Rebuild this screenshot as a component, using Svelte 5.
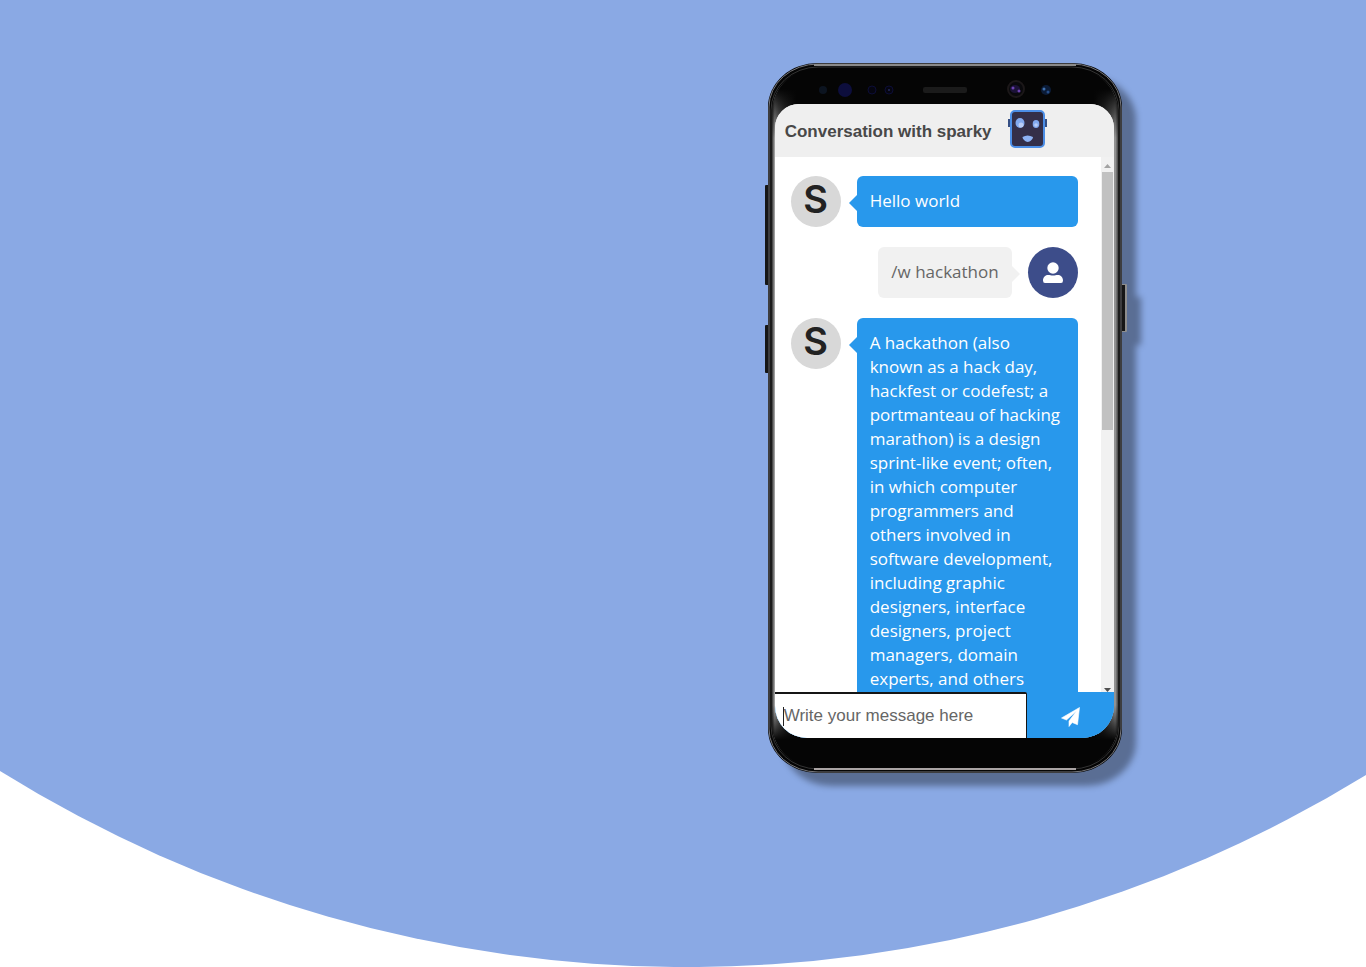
<script>
  const messages = [
    { from: 'bot', text: 'Hello world' },
    { from: 'user', text: '/w hackathon' },
    {
      from: 'bot',
      text: `A hackathon (also
known as a hack day,
hackfest or codefest; a
portmanteau of hacking
marathon) is a design
sprint-like event; often,
in which computer
programmers and
others involved in
software development,
including graphic
designers, interface
designers, project
managers, domain
experts, and others`
    }
  ];
  let draft = $state('');
</script>

<main class="hero">
  <svg class="backdrop" viewBox="0 0 1366 967" preserveAspectRatio="none" aria-hidden="true">
    <path d="M0 0H1366V775A1299 1299 0 0 1 0 771Z" fill="#8aa9e4" />
  </svg>

  <section class="phone">
    <svg class="frame" viewBox="0 0 354 710" aria-hidden="true">
      <defs>
        <linearGradient id="body" x1="0" x2="1" y1="0" y2="0">
          <stop offset="0" stop-color="#333" />
          <stop offset=".008" stop-color="#aaa" />
          <stop offset=".02" stop-color="#777" />
          <stop offset=".038" stop-color="#444" />
          <stop offset=".07" stop-color="#050505" />
          <stop offset=".93" stop-color="#050505" />
          <stop offset=".962" stop-color="#444" />
          <stop offset=".98" stop-color="#777" />
          <stop offset=".992" stop-color="#999" />
          <stop offset="1" stop-color="#444" />
        </linearGradient>
        <linearGradient id="shade" x1="0" x2="0" y1="0" y2="1">
          <stop offset="0" stop-color="#050505" />
          <stop offset=".03" stop-color="#050505" />
          <stop offset=".1" stop-color="#050505" stop-opacity="0" />
          <stop offset=".91" stop-color="#050505" stop-opacity="0" />
          <stop offset=".96" stop-color="#050505" />
          <stop offset="1" stop-color="#050505" />
        </linearGradient>
      </defs>
      <g fill="#161616">
        <rect x="-3" y="122" width="5" height="100" rx="1" />
        <rect x="-3" y="262" width="5" height="48" rx="1" />
        <rect x="352" y="221" width="7" height="48" rx="1" fill="#8d8d8d" />
        <rect x="352" y="222" width="5" height="46" />
      </g>
      <rect width="354" height="710" rx="50" ry="44" fill="#050505" />
      <rect x="1" y="1" width="352" height="708" rx="49" ry="43" fill="none" stroke="#77777a" stroke-width="1" />
      <rect x="4" y="5" width="346" height="700" rx="46" ry="44" fill="url(#body)" />
      <rect x="4" y="5" width="346" height="700" rx="46" ry="44" fill="url(#shade)" />
      <rect x="3" y="4" width="348" height="702" rx="47" ry="43" fill="none" stroke="#333" stroke-width="1" />
      <path d="M46 2H308" stroke="#8b8b8b" stroke-width="2" />
      <path d="M46 706H308" stroke="#aaa4a4" stroke-width="2" />
      <circle cx="55" cy="27" r="4" fill="#0c1420" />
      <circle cx="77" cy="27" r="7" fill="#0d0e3d" />
      <circle cx="104" cy="27" r="4" fill="#050510" stroke="#0c0d36" />
      <circle cx="121" cy="27" r="4" fill="#050510" stroke="#0c0d36" />
      <circle cx="121" cy="27" r="1" fill="#242a5a" />
      <rect x="155" y="24" width="44" height="6" rx="2" fill="#1b1b1b" />
      <circle cx="248" cy="26" r="8" fill="#09090c" stroke="#1c1819" stroke-width="2" />
      <ellipse cx="247" cy="26" rx="5" ry="4" fill="#1c1238" />
      <circle cx="245" cy="25" r="1.5" fill="#6a42b0" />
      <circle cx="251" cy="28" r="1.5" fill="#6a42b0" />
      <circle cx="278" cy="27" r="5" fill="#0b1b36" />
      <circle cx="276" cy="26" r="1.5" fill="#3f70ad" />
      <circle cx="280" cy="29" r="1.5" fill="#254c88" />
    </svg>

    <div class="screen">
      <header class="title">
        <h1>Conversation with sparky</h1>
        <svg width="40" height="38" viewBox="0 0 40 38" role="img" aria-label="Robot">
          <path d="M1 9h5v8H1zM35 9h5v8h-5z" fill="#354f84" />
          <rect x="4" y="1" width="33" height="36" rx="4" fill="#342f49" stroke="#4c8ee6" stroke-width="2" />
          <ellipse cx="13" cy="13" rx="4.500" ry="5" fill="#82a9ee" />
          <circle cx="14" cy="15" r="2.500" fill="#b9cdf7" />
          <ellipse cx="29" cy="14" rx="3.300" ry="4" fill="#82a9ee" />
          <circle cx="29" cy="15" r="1.800" fill="#b9cdf7" />
          <path d="M15.500 27q5-3 10.500 0c0 2-3 5-5.200 5s-5.300-3-5.300-5z" fill="#8db2f4" />
        </svg>
      </header>

      <div class="conversation">
        <div class="messages">
          {#each messages as message}
            <article class="row {message.from}">
              {#if message.from === 'bot'}
                <span class="avatar">S</span>
              {:else}
                <span class="avatar">
                  <svg width="20" height="22" viewBox="0 0 20 22" fill="#fff" role="img" aria-label="You">
                    <circle cx="10" cy="6" r="5.700" />
                    <path d="M0 18.500c0-3 2-5.500 5-5.500 2 0 3 .6 5 .6s3-.6 5-.6c3 0 5 2.500 5 5.500q0 2.500-2 2.500H2q-2 0-2-2.500z" />
                  </svg>
                </span>
              {/if}
              <p class="bubble">{message.text}</p>
            </article>
          {/each}
        </div>
        <div class="scrollbar" aria-hidden="true">
          <svg width="7" height="4" viewBox="0 0 7 4"><path d="M0 4l3.500-4L7 4z" fill="#a3a3a3" /></svg>
          <div class="track"><div class="thumb"></div></div>
          <svg width="7" height="4" viewBox="0 0 7 4"><path d="M0 0l3.500 4L7 0z" fill="#505050" /></svg>
        </div>
      </div>

      <form class="composer" onsubmit={(event) => event.preventDefault()}>
        <div class="field">
          <span class="caret"></span>
          <input aria-label="Message" placeholder="Write your message here" bind:value={draft} />
        </div>
        <button aria-label="Send">
          <svg width="19" height="20" viewBox="0 0 19 20" fill="#fff" stroke="#fff" stroke-width=".6" stroke-linejoin="round" aria-hidden="true">
            <path d="M18.500.5L.5 11l5 2L15.500 4 8 14v5.500l3.200-4 5.300 2.200z" />
          </svg>
        </button>
      </form>
    </div>
  </section>
</main>

<style>
  :global(body) {
    margin: 0;
    background: #fff;
  }
  * {
    box-sizing: border-box;
  }
  .hero {
    display: grid;
    min-height: 100vh;
    overflow: hidden;
  }
  .backdrop,
  .phone {
    grid-area: 1 / 1;
  }
  .backdrop {
    display: block;
    width: 100%;
    height: 100%;
    min-height: 0;
    contain: size;
  }
  .phone {
    display: grid;
    align-self: start;
    width: 354px;
    aspect-ratio: 354 / 710;
    margin: 63px 0 0 56.2%;
  }
  .frame,
  .screen {
    grid-area: 1 / 1;
    min-width: 0;
  }
  .frame {
    width: 100%;
    overflow: visible;
    filter: drop-shadow(14px 13px 3px rgba(0, 0, 0, 0.35));
  }
  .screen {
    z-index: 1;
    display: flex;
    flex-direction: column;
    height: 634px;
    margin: 41px 8px 0 7px;
    overflow: hidden;
    border-radius: 24px 24px 32px 32px;
    background: #fff;
    font-family: 'Liberation Sans', Arial, sans-serif;
  }
  .title {
    display: flex;
    align-items: center;
    gap: 15px;
    height: 53px;
    padding: 0 10px 4px;
    background: #efefef;
  }
  .title h1 {
    margin: 6px 0 0;
    font-size: 17px;
    line-height: 20px;
    white-space: nowrap;
    color: #484848;
  }
  .conversation {
    display: flex;
    flex: 1;
    min-height: 0;
  }
  .messages {
    display: flex;
    flex: 1;
    flex-direction: column;
    gap: 20px;
    min-width: 0;
    padding: 19px 23px 0 16px;
    overflow: hidden;
  }
  .row {
    display: flex;
    flex-shrink: 0;
    align-items: flex-start;
    gap: 16px;
  }
  .row.user {
    flex-direction: row-reverse;
  }
  .avatar {
    display: grid;
    flex: none;
    place-items: center;
    width: 50px;
    height: 51px;
    border-radius: 50%;
    background: #d8d8d8;
    font: 600 38px/46px Inter, sans-serif;
    color: #222;
  }
  .bot .avatar {
    padding-bottom: 5px;
  }
  .user .avatar {
    background: #3d4d8a;
  }
  .bubble {
    position: relative;
    flex: 1;
    margin: 0;
    padding: 13px 13px 14px;
    border-radius: 6px;
    background: #2898ec;
    color: #fff;
    font: 17px/24px 'Open Sans', 'Segoe UI', sans-serif;
    white-space: pre;
  }
  .bubble::before {
    content: '';
    position: absolute;
    top: 19px;
    right: 100%;
    border: solid transparent;
    border-width: 8px 8px 8px 0;
    border-right-color: #2898ec;
  }
  .user .bubble {
    flex: none;
    background: #f1f1f1;
    color: #666;
  }
  .user .bubble::before {
    right: auto;
    left: 100%;
    border-width: 8px 0 8px 8px;
    border-left-color: #f1f1f1;
  }
  .scrollbar {
    display: flex;
    flex-direction: column;
    align-items: center;
    width: 13px;
    padding: 7px 0 0;
    background: #f1f1f1;
  }
  .scrollbar svg {
    flex: none;
  }
  .track {
    flex: 1;
    width: 11px;
    padding-top: 4px;
  }
  .thumb {
    height: 50%;
    background: #c1c1c1;
  }
  .composer {
    display: flex;
    height: 46px;
    background: #2898ec;
  }
  .field {
    display: flex;
    flex: 1;
    align-items: center;
    min-width: 0;
    padding-left: 8px;
    border-top: 2px solid #151515;
    border-right: 1px solid #151515;
    border-top-right-radius: 2px;
    background: #fff;
  }
  .caret {
    width: 1px;
    height: 19px;
    background: #222;
  }
  input {
    flex: 1;
    min-width: 0;
    height: 100%;
    padding: 0;
    border: 0;
    outline: 0;
    background: none;
    font: 17px 'Liberation Sans', Arial, sans-serif;
    color: #333;
  }
  input::placeholder {
    color: #666;
    opacity: 1;
  }
  button {
    display: grid;
    place-items: center;
    width: 87px;
    padding: 4px 0 0;
    border: 0;
    background: #2898ec;
    cursor: pointer;
  }
</style>
